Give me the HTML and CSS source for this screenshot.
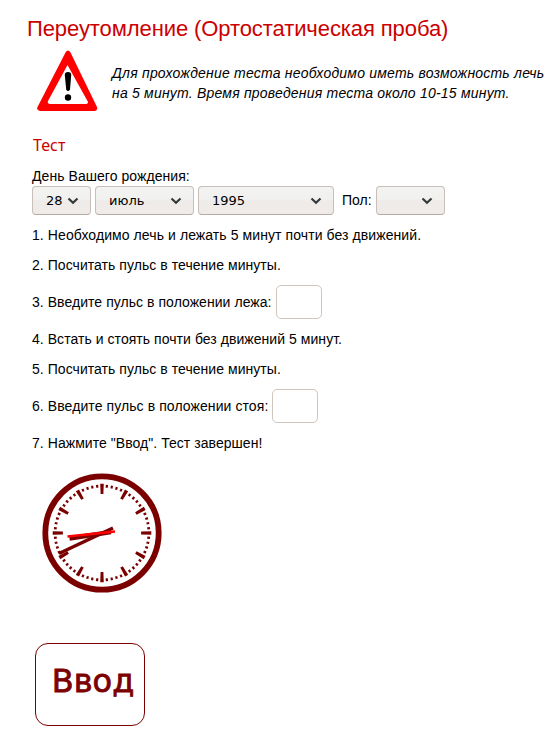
FILE: index.html
```
<!DOCTYPE html>
<html lang="ru">
<head>
<meta charset="utf-8">
<title>Переутомление (Ортостатическая проба)</title>
<link rel="stylesheet" href="styles.css">
</head>
<body>
<main class="page">
  <h1 class="title">Переутомление (Ортостатическая проба)</h1>
  <div class="notice">
    <svg class="warning" width="62" height="62" viewBox="0 0 62 62">
      <path fill="#f00" fill-rule="evenodd" d="M28.500 2.500Q31 -1.500 33.500 2.500L60 57Q61 60 58 61H3Q-1 60 .5 57ZM30.500 15L11 51Q10 53.500 13 54H49Q52 53.500 50.500 51Z"/>
      <path d="M27.800 25Q27.800 22 31 22Q34.200 22 34.200 25L33 39.500Q31 42.500 29.200 39.500Z"/>
      <circle cx="31" cy="47.500" r="3.200"/>
    </svg>
    <p class="notice-text">Для прохождение теста необходимо иметь возможность лечь<br>на 5 минут. Время проведения теста около 10-15 минут.</p>
  </div>
  <h2 class="subtitle">Тест</h2>
  <div class="label">День Вашего рождения:</div>
  <div class="fields">
    <div class="select day">28<svg class="arrow" viewBox="0 0 12 8"><path d="M1.500 1.500L6 5.800L10.500 1.500"/></svg></div>
    <div class="select month">июль<svg class="arrow" viewBox="0 0 12 8"><path d="M1.500 1.500L6 5.800L10.500 1.500"/></svg></div>
    <div class="select year">1995<svg class="arrow" viewBox="0 0 12 8"><path d="M1.500 1.500L6 5.800L10.500 1.500"/></svg></div>
    <span class="sex-label">Пол:</span>
    <div class="select sex"><svg class="arrow" viewBox="0 0 12 8"><path d="M1.500 1.500L6 5.800L10.500 1.500"/></svg></div>
  </div>
  <div class="steps">
    <p class="step loose">1. Необходимо лечь и лежать 5 минут почти без движений.</p>
    <p class="step">2. Посчитать пульс в течение минуты.</p>
    <p class="step with-input">3. Введите пульс в положении лежа:<input class="pulse" type="text"></p>
    <p class="step">4. Встать и стоять почти без движений 5 минут.</p>
    <p class="step">5. Посчитать пульс в течение минуты.</p>
    <p class="step with-input loose">6. Введите пульс в положении стоя:<input class="pulse" type="text"></p>
    <p class="step">7. Нажмите "Ввод". Тест завершен!</p>
  </div>
  <svg class="clock" width="120" height="120" viewBox="-60 -60 120 120">
    <circle r="56.700" fill="#fff" stroke="#7b0000" stroke-width="5.800"/>
    <circle r="46.900" pathLength="240" fill="none" stroke="#7b0000" stroke-width="2.800" stroke-dasharray="1.800 2.200" stroke-dashoffset=".9"/>
    <circle r="44.200" pathLength="360" fill="none" stroke="#7b0000" stroke-width="10.200" stroke-dasharray="4.200 25.800" stroke-dashoffset="2.100"/>
    <path d="M-32.500 5.500L9 -1" stroke="#7b0000" stroke-width="4.800"/>
    <path d="M-43 20.500L11 -5" stroke="#7b0000" stroke-width="3.500"/>
    <path d="M-34.500 3.500L13 -1.500" stroke="#f00" stroke-width="2.400"/>
  </svg>
  <button class="submit" type="button">Ввод</button>
</main>
</body>
</html>
```
FILE: styles.css
```
* { box-sizing: border-box; }
body {
  margin: 0;
  background: #fff;
  color: #000;
  font: 14px/20px "Liberation Sans", Arial, sans-serif;
  overflow: hidden;
}
.page { height: 738px; padding: 15px 0 0 32px; overflow: hidden; }
.title {
  margin: 0 0 0 -5px;
  font-size: 22px;
  line-height: 28px;
  font-weight: normal;
  letter-spacing: -.09px;
  color: #c00;
  white-space: nowrap;
}
.notice { display: flex; height: 62px; margin: 7px 0 0 5px; }
.warning { flex: none; display: block; }
.notice-text {
  margin: 13px 0 0 13px;
  font-style: italic;
  letter-spacing: .21px;
  white-space: nowrap;
}
.subtitle {
  margin: 21px 0 0 1px;
  font: 16px/24px "Noto Sans", "Open Sans", sans-serif;
  color: #c00;
}
.label { margin-top: 9px; letter-spacing: .06px; }
.fields { display: flex; width: 413px; height: 29px; }
.select {
  display: flex;
  align-items: center;
  justify-content: space-between;
  height: 29px;
  padding: 0 11px 0 13px;
  border: 1px solid #c9bfb8;
  border-bottom-color: #b5aaa4;
  border-radius: 4px;
  background: linear-gradient(#f3f3f1, #f0f0ee 48%, #efebe8 52%, #f0ebe8);
  font: 13px/20px "DejaVu Sans", sans-serif;
}
.arrow {
  width: 12px;
  height: 8px;
  margin-left: auto;
  fill: none;
  stroke: #333a3c;
  stroke-width: 2.2;
}
.day { width: 59px; margin-right: 4px; }
.month { width: 99px; margin-right: 4px; }
.year { width: 136px; }
.sex-label { margin: 4px 4px 0 8px; }
.sex { width: 69px; margin-left: auto; }
.steps { padding-top: 10px; }
.step { margin: 0 0 10px; letter-spacing: .05px; white-space: nowrap; }
.loose { letter-spacing: .085px; }
.with-input { display: flex; align-items: center; height: 34px; }
.pulse {
  width: 46px;
  height: 34px;
  margin-left: 4px;
  border: 1px solid #cfc6bd;
  border-radius: 5px;
  background: #fff;
}
.clock { display: block; margin: 20px 0 0 10px; }
.submit {
  display: block;
  width: 110px;
  height: 83px;
  margin: 50px 0 0 3px;
  padding: 0 0 8px 6px;
  border: 1px solid #7b0000;
  border-radius: 13px;
  background: #fff;
  color: #7b0000;
  font: 32px/40px "DejaVu Sans", sans-serif;
  -webkit-text-stroke: .8px #7b0000;
}
```
